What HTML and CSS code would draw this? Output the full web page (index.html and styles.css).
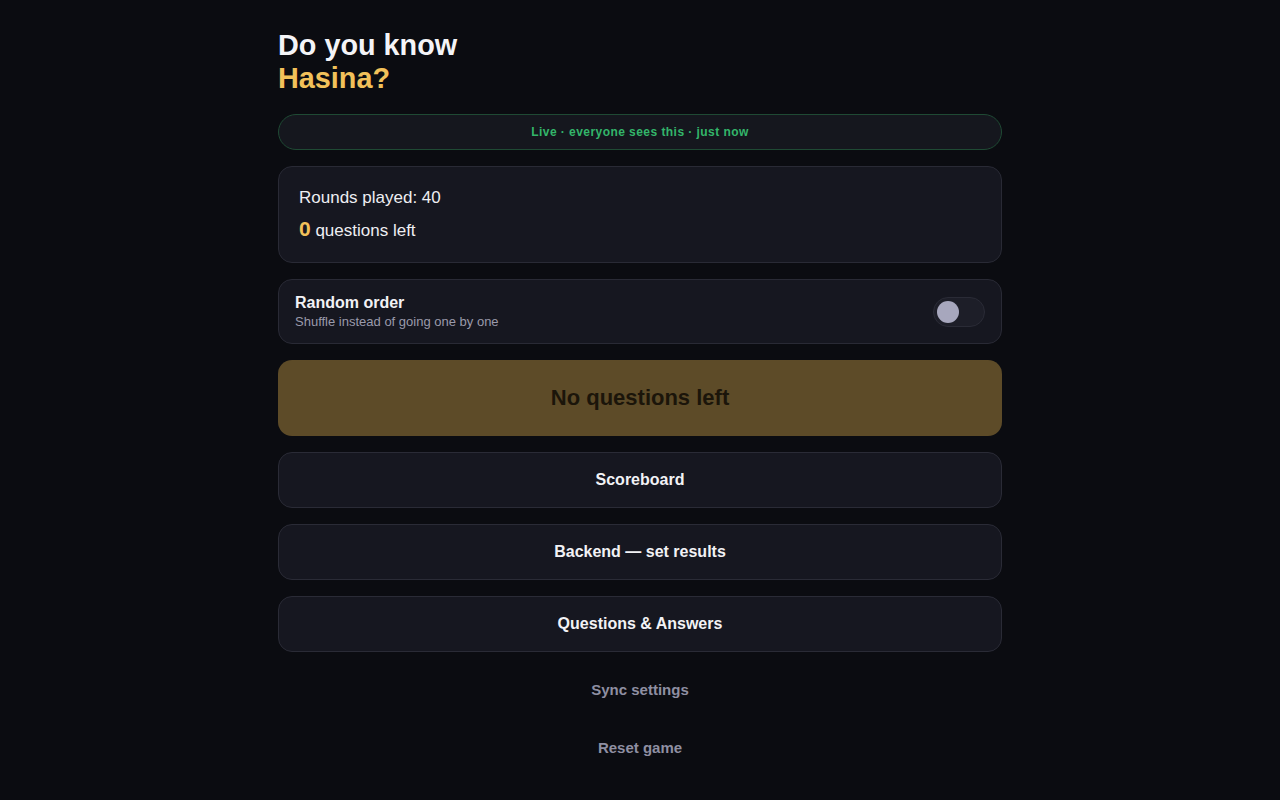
FILE: index.html
```html
<!DOCTYPE html>
<html lang="en">
<head>
<meta charset="utf-8">
<title>Do you know Hasina?</title>
<link rel="stylesheet" href="styles.css">
</head>
<body>
<main class="app">
  <h1 class="title">Do you know<br><span class="accent">Hasina?</span></h1>
  <div class="live">Live · everyone sees this · just now</div>
  <section class="card stats">
    <div class="stat-line">Rounds played: 40</div>
    <div class="stat-left"><span class="num">0</span> questions left</div>
  </section>
  <section class="card toggle-row">
    <div class="toggle-text">
      <div class="toggle-title">Random order</div>
      <div class="toggle-sub">Shuffle instead of going one by one</div>
    </div>
    <div class="switch"><span class="knob"></span></div>
  </section>
  <button class="primary">No questions left</button>
  <button class="btn">Scoreboard</button>
  <button class="btn">Backend — set results</button>
  <button class="btn">Questions &amp; Answers</button>
  <button class="link">Sync settings</button>
  <button class="link">Reset game</button>
</main>
</body>
</html>
```
FILE: styles.css
```css
* { box-sizing: border-box; }
html, body { margin: 0; padding: 0; }
body {
  background: #0b0c11;
  color: #f2f2f5;
  font-family: "Liberation Sans", Arial, sans-serif;
}
.app {
  width: 724px;
  margin: 0 auto;
  padding-top: 29px;
  display: flex;
  flex-direction: column;
  gap: 16px;
}
.title {
  margin: 0 0 3px;
  font-size: 28.8px;
  line-height: 33px;
  font-weight: 700;
  color: #f4f4f7;
}
.accent { color: #f2c15a; }
.live {
  border: 1px solid #1f4a34;
  background: #15171e;
  border-radius: 999px;
  padding: 10px 16px;
  text-align: center;
  font-size: 12px;
  line-height: 14px;
  font-weight: 700;
  letter-spacing: 0.45px;
  color: #33b56a;
}
.card {
  background: #161720;
  border: 1px solid #292a35;
  border-radius: 14px;
}
.stats { padding: 20px 20px 19px; }
.stat-line {
  font-size: 17px;
  line-height: 22px;
  margin-bottom: 7px;
  color: #eeeef2;
}
.stat-left {
  font-size: 17px;
  line-height: 25px;
  color: #eeeef2;
}
.num {
  color: #f2c15a;
  font-weight: 700;
  font-size: 21px;
}
.toggle-row {
  padding: 14px 16px 13px;
  display: flex;
  align-items: center;
  justify-content: space-between;
}
.toggle-title {
  font-size: 16px;
  line-height: 18px;
  font-weight: 700;
  color: #f2f2f5;
}
.toggle-sub {
  margin-top: 2px;
  font-size: 13px;
  line-height: 16px;
  color: #9a9aab;
}
.switch {
  width: 52px;
  height: 30px;
  border-radius: 999px;
  background: #1d1e28;
  border: 1px solid #2a2b36;
  display: flex;
  align-items: center;
  padding-left: 3px;
}
.knob {
  width: 22px;
  height: 22px;
  border-radius: 50%;
  background: #a7a7bd;
}
button {
  font-family: "Liberation Sans", Arial, sans-serif;
  cursor: pointer;
}
.primary {
  height: 76px;
  border: none;
  border-radius: 14px;
  background: #5d4b28;
  color: #1b150a;
  font-size: 22px;
  font-weight: 700;
}
.btn {
  height: 56px;
  background: #161720;
  border: 1px solid #2a2b36;
  border-radius: 14px;
  color: #f2f2f5;
  font-size: 16px;
  font-weight: 700;
}
.link {
  height: 42px;
  background: none;
  border: none;
  color: #8f8fa2;
  font-size: 15px;
  font-weight: 700;
}
```
